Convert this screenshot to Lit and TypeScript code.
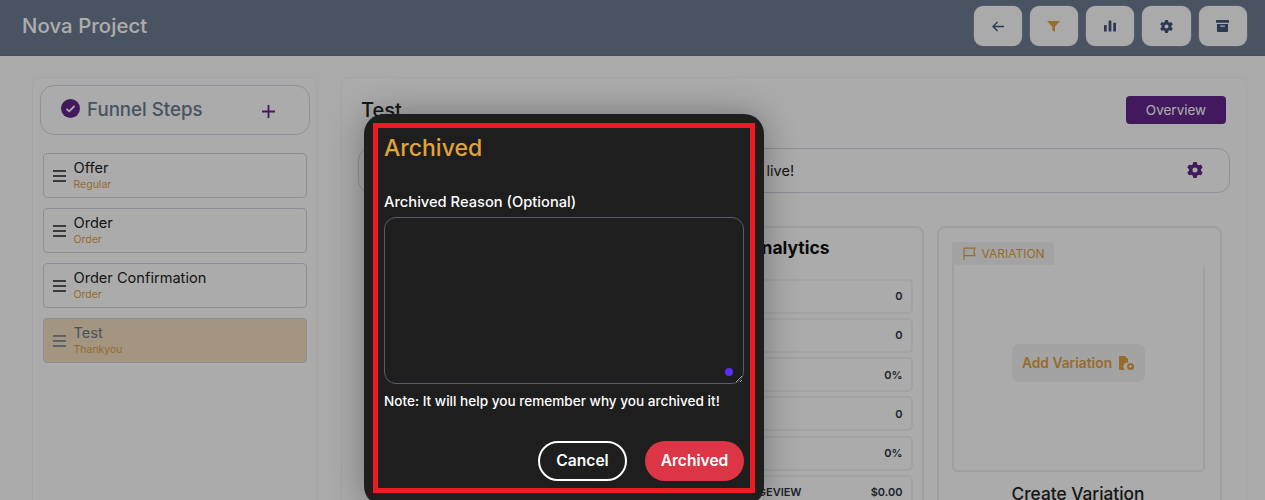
import { LitElement, html, css, svg } from "lit";
import { customElement } from "lit/decorators.js";

const GEAR = svg`<path d="M495.9 166.6c3.2 8.7 .5 18.4-6.4 24.6l-43.3 39.4c1.1 8.3 1.7 16.8 1.7 25.4s-.6 17.1-1.7 25.4l43.3 39.4c6.9 6.2 9.6 15.9 6.4 24.6c-4.4 11.9-9.7 23.3-15.8 34.3l-4.7 8.1c-6.6 11-14 21.4-22.1 31.2c-5.9 7.2-15.7 9.6-24.5 6.8l-55.7-17.7c-13.4 10.3-28.2 18.9-44 25.4l-12.5 57.1c-2 9.1-9 16.3-18.2 17.8c-13.8 2.3-28 3.5-42.5 3.5s-28.7-1.2-42.5-3.5c-9.2-1.5-16.2-8.7-18.2-17.8l-12.5-57.1c-15.8-6.5-30.6-15.1-44-25.4L83.1 425.9c-8.8 2.8-18.6 .3-24.5-6.8c-8.1-9.8-15.5-20.2-22.1-31.2l-4.7-8.1c-6.1-11-11.4-22.4-15.8-34.3c-3.2-8.7-.5-18.4 6.4-24.6l43.3-39.4C64.6 273.1 64 264.6 64 256s.6-17.1 1.7-25.4L22.4 191.2c-6.9-6.2-9.6-15.9-6.4-24.6c4.4-11.9 9.7-23.3 15.8-34.3l4.7-8.1c6.6-11 14-21.4 22.1-31.2c5.9-7.2 15.7-9.6 24.5-6.8l55.7 17.7c13.4-10.3 28.2-18.9 44-25.4l12.5-57.1c2-9.1 9-16.3 18.2-17.8C227.3 1.2 241.5 0 256 0s28.7 1.2 42.5 3.5c9.2 1.5 16.2 8.7 18.2 17.8l12.5 57.1c15.8 6.5 30.6 15.1 44 25.4l55.7-17.7c8.8-2.8 18.6-.3 24.5 6.8c8.1 9.8 15.5 20.2 22.1 31.2l4.7 8.1c6.1 11 11.4 22.4 15.8 34.3zM256 336a80 80 0 1 0 0-160 80 80 0 1 0 0 160z"/>`;

const gear = (size: number, color: string) => html`<svg width=${size} height=${size} viewBox="0 0 512 512" fill=${color}>${GEAR}</svg>`;

const steps = [
  { name: "Offer", type: "Regular", on: false },
  { name: "Order", type: "Order", on: false },
  { name: "Order Confirmation", type: "Order", on: false },
  { name: "Test", type: "Thankyou", on: true },
];
const rows = [
  ["VISITORS", "0"],
  ["LEADS", "0"],
  ["CONVERSION", "0%"],
  ["SALES", "0"],
  ["SALES RATE", "0%"],
  ["EARNINGS PER PAGEVIEW", "$0.00"],
];

@customElement("app-root")
export class AppRoot extends LitElement {
  static styles = css`
    :host { display: block; position: relative; width: 1265px; height: 500px; overflow: hidden; background: #fbfbfb; font-family: Inter, "Noto Sans", sans-serif; color: #222; }
    * { box-sizing: border-box; }
    .top { height: 56px; background: #6e7b91; border-bottom: 1px solid #69758a; display: flex; align-items: center; justify-content: space-between; padding: 0 18px 3px 22px; }
    .brand { color: #fff; font-size: 20.300px; font-weight: 500; letter-spacing: .1px; padding-bottom: 2px; }
    .tools { display: flex; gap: 8px; }
    .tool { width: 48px; height: 40px; background: #fbfbfb; border-radius: 9px; display: flex; align-items: center; justify-content: center; box-shadow: 0 0 0 .5px #8d97a8; }
    .tool:nth-child(1) { width: 47.500px; }
    .tool:nth-child(2), .tool:nth-child(4), .tool:nth-child(5) { width: 48.500px; }
    .main { display: flex; padding: 21px 18px 0 32px; gap: 24px; }
    .side { width: 285px; height: 440px; flex: none; background: #fdfdfd; border: 1px solid #f2f2f4; border-radius: 8px; padding: 7px 0 0 7px; }
    .fhead { width: 270px; height: 50px; border: 1px solid #d4d4e4; border-radius: 14px; display: flex; align-items: center; padding: 0 34px 0 20px; margin-bottom: 18px; }
    .fhead h2 { flex: 1; margin: -2px 0 0 7px; font-size: 18.700px; font-weight: 500; color: #6c798e; }
    .check { margin-top: -3px; }
    .plus { margin-top: 2px; }
    .step { height: 45px; margin: 0 0 10px 2.500px; width: 264.500px; border: 1px solid #d2d2de; border-radius: 4px; display: flex; align-items: center; padding: 0 0 0 9px; gap: 8px; }
    .step.on { background: #f0dcbc; }
    .step .n { font-size: 14.600px; line-height: 18px; color: #222; }
    .step.on .n { color: #6c798e; }
    .step .t { font-size: 10.500px; line-height: 14px; margin-top: 1.500px; color: #dc9f45; }
    .content { flex: 1; height: 440px; background: #fdfdfd; border: 1px solid #f2f2f4; border-radius: 8px; padding: 18px 20px 0 16px; }
    .title { display: flex; align-items: center; justify-content: space-between; height: 28px; padding-left: 3px; }
    .title h1 { margin: 0; font-size: 20px; font-weight: 500; color: #222; }
    .over { width: 100px; height: 28px; background: #63258a; border-radius: 4px; color: #fff; font-size: 13.500px; display: flex; align-items: center; justify-content: center; }
    .bar { height: 44.500px; margin: 24px -3.500px 0 0; border: 1px solid #d4d4e4; border-radius: 12px; display: flex; align-items: center; justify-content: space-between; padding: 0 26px 0 16px; font-size: 14.500px; color: #222; }
    .bar span { padding-left: 260px; }
    .cards { display: flex; justify-content: flex-end; gap: 13px; margin-top: 33px; padding-right: 4.500px; }
    .card { width: 285px; height: 300px; flex: none; border: 2px solid #ececf2; border-radius: 8px; }
    .ana { padding: 10px 9px 0 8px; }
    .ana h3 { margin: 0 0 21px -5px; line-height: 20px; font-size: 17.500px; font-weight: 700; white-space: nowrap; color: #111; }
    .row { height: 35px; margin-bottom: 4.300px; border: 2px solid #f0f0f4; border-radius: 5px; display: flex; align-items: center; justify-content: space-between; padding: 0 8px 0 10px; font-size: 11px; font-weight: 600; color: #2c3340; }
    .var { padding: 14px 15px 0 13px; }
    .tag { width: 102px; height: 23px; background: #f1f1f1; border-radius: 3px 3px 0 0; display: flex; align-items: center; gap: 6px; padding-left: 11px; font-size: 12px; color: #dc9f45; }
    .vbox { height: 207px; border: 2px solid #ececf2; border-top: none; border-radius: 0 0 5px 5px; display: flex; align-items: center; justify-content: center; padding-bottom: 8px; }
    .add { width: 133px; height: 38px; background: #f1f1f1; border-radius: 6px; color: #dc9f45; font-size: 13.800px; font-weight: 600; display: flex; align-items: center; justify-content: center; gap: 7px; white-space: nowrap; }
    .cv { margin-top: 11px; text-align: center; font-size: 17.300px; font-weight: 500; color: #222; }
    .scrim { position: absolute; inset: 0; background: rgba(0, 0, 0, .32); }
    .modal { position: absolute; left: 364px; top: 114px; width: 400px; height: 392px; background: #1e1e1e; border-radius: 20px; box-shadow: 0 0 34px rgba(0, 0, 0, .32); padding: 20px 20px 0; color: #fff; display: flex; flex-direction: column; }
    .frame { position: absolute; left: 9px; top: 9px; width: 382px; height: 370px; border: 5px solid #ed1c24; pointer-events: none; }
    .modal h4 { margin: 0; height: 29px; line-height: 29px; font-size: 23px; font-weight: 500; color: #e0a53a; }
    .lab { margin-top: 30px; height: 24px; line-height: 18px; font-size: 14.700px; font-weight: 500; }
    .taw { position: relative; height: 167px; }
    textarea { display: block; width: 360px; height: 167px; background: transparent; border: 1px solid #5a5b66; border-radius: 12px; outline: none; color: #fff; }
    .dot { position: absolute; right: 11px; bottom: 8px; width: 8px; height: 8px; border-radius: 50%; background: #5b2ef5; }
    .note { margin-top: 7.500px; font-size: 13.600px; line-height: 18px; font-weight: 500; white-space: nowrap; }
    .btns { display: flex; justify-content: flex-end; gap: 18px; margin-top: 31px; }
    .btn { height: 40px; border-radius: 20px; display: flex; align-items: center; justify-content: center; font-size: 15.600px; font-weight: 600; }
    .cancel { width: 89px; border: 2px solid #fff; }
    .arch { width: 99px; background: #dc3545; }
  `;

  render() {
    return html`
      <div class="top">
        <div class="brand">Nova Project</div>
        <div class="tools">
          <div class="tool"><svg width="12" height="11" viewBox="0 0 12 11" fill="none" stroke="#40557a" stroke-width="1.400"><path d="M12 5.500H1.200M5.500 1 1 5.500 5.500 10"/></svg></div>
          <div class="tool"><svg width="13" height="11" viewBox="0 0 14 12" fill="#e2a43a"><path d="M0 0h14L8.600 6.200V12L5.600 10V6.200z"/></svg></div>
          <div class="tool"><svg width="12" height="12" viewBox="0 0 13 12" fill="#40557a"><rect y="5" width="3" height="7" rx=".6"/><rect x="5" width="3" height="12" rx=".6"/><rect x="10" y="2.500" width="3" height="9.500" rx=".6"/></svg></div>
          <div class="tool">${gear(13, "#40557a")}</div>
          <div class="tool"><svg width="13" height="12" viewBox="0 0 14 13" fill="#40557a"><rect width="14" height="3" rx=".6"/><path d="M1 4.200h12V12a1 1 0 0 1-1 1H2a1 1 0 0 1-1-1zM4.500 6v1.200h5V6z" fill-rule="evenodd"/></svg></div>
        </div>
      </div>
      <div class="main">
        <div class="side">
          <div class="fhead">
            <svg class="check" width="19" height="19" viewBox="0 0 19 19"><circle cx="9.500" cy="9.500" r="9.500" fill="#63258a"/><path d="M5.500 9.800 8.200 12.300 13.500 7" fill="none" stroke="#fff" stroke-width="1.800"/></svg>
            <h2>Funnel Steps</h2>
            <svg class="plus" width="13" height="13" viewBox="0 0 13 13" stroke="#63258a" stroke-width="1.800"><path d="M6.500 0v13M0 6.500h13"/></svg>
          </div>
          ${steps.map((s) => html`
            <div class="step ${s.on ? "on" : ""}">
              <svg width="13" height="12" viewBox="0 0 13 12" stroke=${s.on ? "#6c798e" : "#222"} stroke-width="1.700"><path d="M0 1h13M0 6h13M0 11h13"/></svg>
              <div><div class="n">${s.name}</div><div class="t">${s.type}</div></div>
            </div>`)}
        </div>
        <div class="content">
          <div class="title"><h1>Test</h1><div class="over">Overview</div></div>
          <div class="bar"><span>Your funnel step is live!</span>${gear(16, "#63258a")}</div>
          <div class="cards">
            <div class="card ana">
              <h3>Funnel Step Analytics</h3>
              ${rows.map((r) => html`<div class="row"><span>${r[0]}</span><span>${r[1]}</span></div>`)}
            </div>
            <div class="card var">
              <div class="tag">
                <svg width="13" height="13" viewBox="0 0 12 12" fill="none" stroke="#dc9f45" stroke-width="1.100"><path d="M1 12V1h10L10 4.500 11 8H1"/></svg>
                VARIATION
              </div>
              <div class="vbox">
                <div class="add">Add Variation
                  <svg width="15" height="14" viewBox="0 0 15 14" fill="#dc9f45"><path d="M0 1a1 1 0 0 1 1-1h5l3 3v3.500A4 4 0 0 0 6.500 14H1a1 1 0 0 1-1-1z"/><circle cx="11.500" cy="10.500" r="3.500"/><path d="M9.800 10.500h3.400M11.500 8.800v3.400" stroke="#f1f1f1" stroke-width="1"/></svg>
                </div>
              </div>
              <div class="cv">Create Variation</div>
            </div>
          </div>
        </div>
      </div>
      <div class="scrim"></div>
      <div class="modal">
        <h4>Archived</h4>
        <div class="lab">Archived Reason (Optional)</div>
        <div class="taw"><textarea></textarea><div class="dot"></div></div>
        <div class="note">Note: It will help you remember why you archived it!</div>
        <div class="btns">
          <div class="btn cancel">Cancel</div>
          <div class="btn arch">Archived</div>
        </div>
        <div class="frame"></div>
      </div>
    `;
  }
}
